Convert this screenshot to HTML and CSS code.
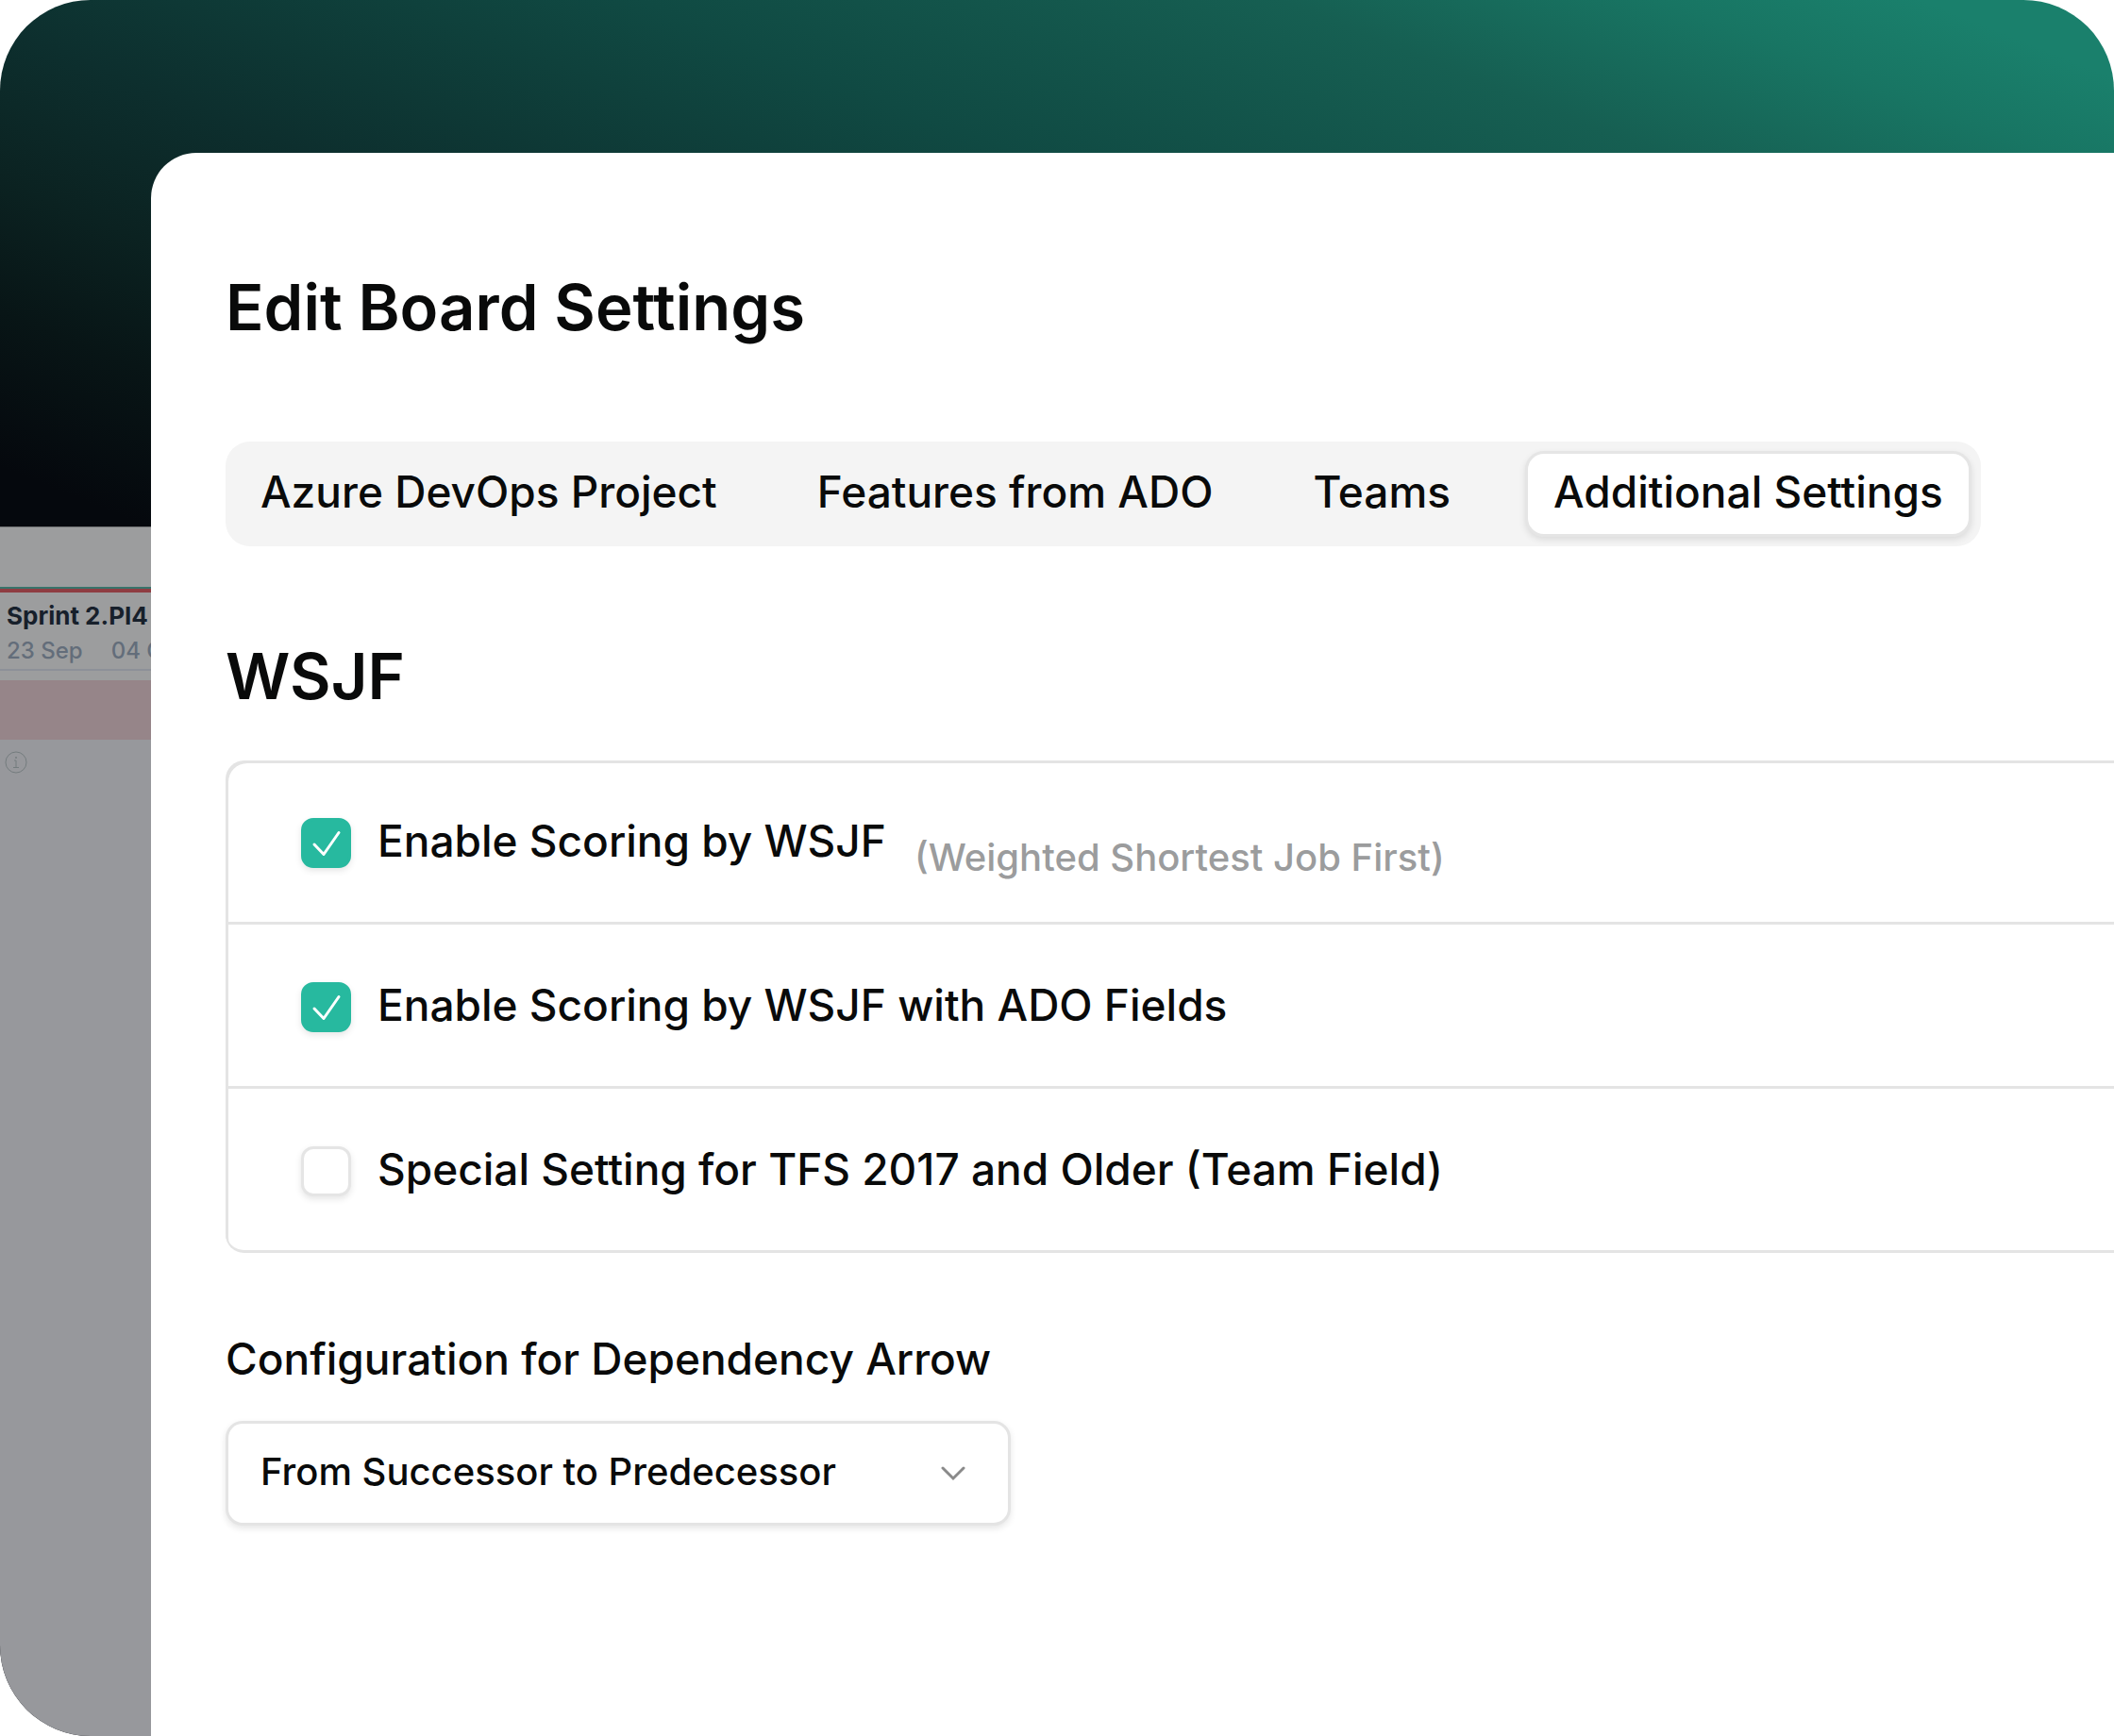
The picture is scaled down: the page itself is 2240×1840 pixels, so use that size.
FILE: index.html
```
<!DOCTYPE html>
<html lang="en">
<head>
    <meta charset="UTF-8">
    <meta name="viewport" content="width=device-width, initial-scale=1.0">
    <title>Edit Board Settings</title>
    <link rel="stylesheet" href="styles.css">
</head>
<body>
    <div class="frame">
        <!-- Dimmed board behind the settings panel -->
        <aside class="board">
            <div class="board-top"></div>
            <div class="sprint">
                <div class="sprint-name">Sprint 2.PI4</div>
                <div class="sprint-dates"><span>23 Sep</span><span>04 Oct</span></div>
            </div>
            <div class="board-alert"></div>
            <svg class="info-icon" viewBox="0 0 24 24" fill="none" stroke="currentColor">
                <circle cx="12" cy="12" r="11"/>
                <path d="M10 10h2v7M9 17.500h6"/>
                <circle cx="12" cy="7" r="1" fill="currentColor" stroke="none"/>
            </svg>
        </aside>

        <main class="panel">
            <h1>Edit Board Settings</h1>

            <nav class="tabs">
                <button type="button" class="tab">Azure DevOps Project</button>
                <button type="button" class="tab">Features from ADO</button>
                <button type="button" class="tab">Teams</button>
                <button type="button" class="tab active">Additional Settings</button>
            </nav>

            <h2>WSJF</h2>
            <div class="options">
                <div class="option">
                    <span class="check">
                        <input type="checkbox" id="wsjf" checked>
                        <svg viewBox="0 0 53 53"><path d="M14 28l10 10.500L40 15.500"/></svg>
                    </span>
                    <label for="wsjf">Enable Scoring by WSJF</label>
                    <span class="hint">(Weighted Shortest Job First)</span>
                </div>
                <div class="option">
                    <span class="check">
                        <input type="checkbox" id="wsjf-ado" checked>
                        <svg viewBox="0 0 53 53"><path d="M14 28l10 10.500L40 15.500"/></svg>
                    </span>
                    <label for="wsjf-ado">Enable Scoring by WSJF with ADO Fields</label>
                </div>
                <div class="option">
                    <span class="check">
                        <input type="checkbox" id="tfs">
                        <svg viewBox="0 0 53 53"><path d="M14 28l10 10.500L40 15.500"/></svg>
                    </span>
                    <label for="tfs">Special Setting for TFS 2017 and Older (Team Field)</label>
                </div>
            </div>

            <label class="field-label" for="arrow">Configuration for Dependency Arrow</label>
            <div class="select">
                <select id="arrow">
                    <option>From Successor to Predecessor</option>
                    <option>From Predecessor to Successor</option>
                </select>
                <svg class="chevron" viewBox="0 0 26 26"><path d="M2 7l11 11L24 7"/></svg>
            </div>
        </main>
    </div>
</body>
</html>
```
FILE: styles.css
```
* {
    box-sizing: border-box;
}
body {
    margin: 0;
    background: #fff;
    color: #090a0a;
    font-family: Inter, sans-serif;
    font-size: 46px;
    font-weight: 500;
    line-height: 48px;
}
.frame {
    display: grid;
    grid-template-columns: 160px 1fr;
    min-height: 100vh;
    border-radius: 96px 96px 0 96px;
    overflow: hidden;
    background: linear-gradient(22deg, #05080d 49%, #081516 55%, #0b2221 60%, #0d2f2e 66%, #104a43 77%, #165f52 87%, #187563 93%, #1a806c 97%);
}

/* Board strip */
.board {
    display: flex;
    flex-direction: column;
    margin-top: 558px;
    overflow: hidden;
    background: #97989c;
    white-space: nowrap;
}
.board-top {
    height: 66px;
    border-top: 1px solid #6f7072;
    border-bottom: 2px solid #38736a;
    background: #9c9d9e;
}
.sprint {
    height: 97px;
    padding: 7px 7px 0;
    border-top: 4px solid #8f3d42;
    border-bottom: 10px solid #9c9d9e;
    background: #9c9d9e;
    box-shadow: inset 0 -2px #8d9098;
}
.sprint-name {
    color: #17202b;
    font-size: 26px;
    font-weight: 700;
    line-height: 36px;
}
.sprint-dates {
    display: flex;
    gap: 30px;
    color: #636d7a;
    font-size: 24px;
    font-weight: 500;
    line-height: 38px;
}
.board-alert {
    height: 63px;
    background: #968589;
}
.info-icon {
    width: 24px;
    height: 24px;
    margin: 12px 5px;
    color: #747c7e;
}

/* Settings panel */
.panel {
    margin-top: 162px;
    padding: 124px 0 80px 79px;
    border-top-left-radius: 48px;
    background: #fff;
}
h1, h2 {
    margin: 0;
    font-size: 67px;
    font-weight: 600;
    line-height: 80px;
}
.tabs {
    display: flex;
    gap: 52px;
    width: fit-content;
    margin: 102px 0 98px;
    padding: 10px;
    border-radius: 26px;
    background: #f4f4f4;
}
.tab {
    padding: 16px 24px 21px;
    border: 3px solid transparent;
    border-radius: 20px;
    background: none;
    color: inherit;
    font: inherit;
    cursor: pointer;
}
.tab.active {
    padding: 16px 27px 21px;
    border-color: #e5e5e5;
    background: #fff;
    box-shadow: 0 3px 7px rgba(0, 0, 0, 0.1);
}
.options {
    margin: 49px 0 82px;
    border-radius: 20px 0 0 20px;
    box-shadow: inset 3px 3px #e4e4e4, inset 0 -3px #e4e4e4;
}
.option {
    display: flex;
    align-items: flex-start;
    gap: 28px;
    padding: 61px 80px 57px;
    border-bottom: 3px solid #e4e4e4;
}
.option:last-child {
    border-bottom-color: transparent;
}
.check {
    display: grid;
}
.check input,
.check svg {
    grid-area: 1 / 1;
    width: 53px;
    height: 53px;
    margin: 0;
}
.check input {
    appearance: none;
    border: 3px solid #e5e5e5;
    border-radius: 13px;
    background: #fff;
    box-shadow: 0 3px 7px rgba(0, 0, 0, 0.1);
}
.check input:checked {
    border-color: #27b99f;
    background: #27b99f;
}
.check svg {
    fill: none;
    stroke: #fff;
    stroke-width: 3;
    stroke-linecap: round;
    stroke-linejoin: round;
    pointer-events: none;
    visibility: hidden;
}
.check input:checked + svg {
    visibility: visible;
}
.hint {
    margin: 22px 0 -9px 2px;
    color: #9b9c9d;
    font-size: 40px;
    line-height: 40px;
}
.field-label {
    display: block;
    margin-bottom: 36px;
    line-height: 60px;
}
.select {
    display: grid;
    align-items: center;
    width: 832px;
    max-width: 100%;
}
.select select {
    grid-area: 1 / 1;
    height: 111px;
    padding: 0 34px 4px;
    appearance: none;
    border: 3px solid #e4e4e4;
    border-radius: 18px;
    background: #fff;
    box-shadow: 0 3px 7px rgba(0, 0, 0, 0.1);
    color: inherit;
    font: inherit;
    font-size: 40px;
}
.chevron {
    grid-area: 1 / 1;
    justify-self: end;
    width: 26px;
    height: 26px;
    margin-right: 48px;
    fill: none;
    stroke: #8a8a8a;
    stroke-width: 3;
    stroke-linecap: round;
    pointer-events: none;
}
```
